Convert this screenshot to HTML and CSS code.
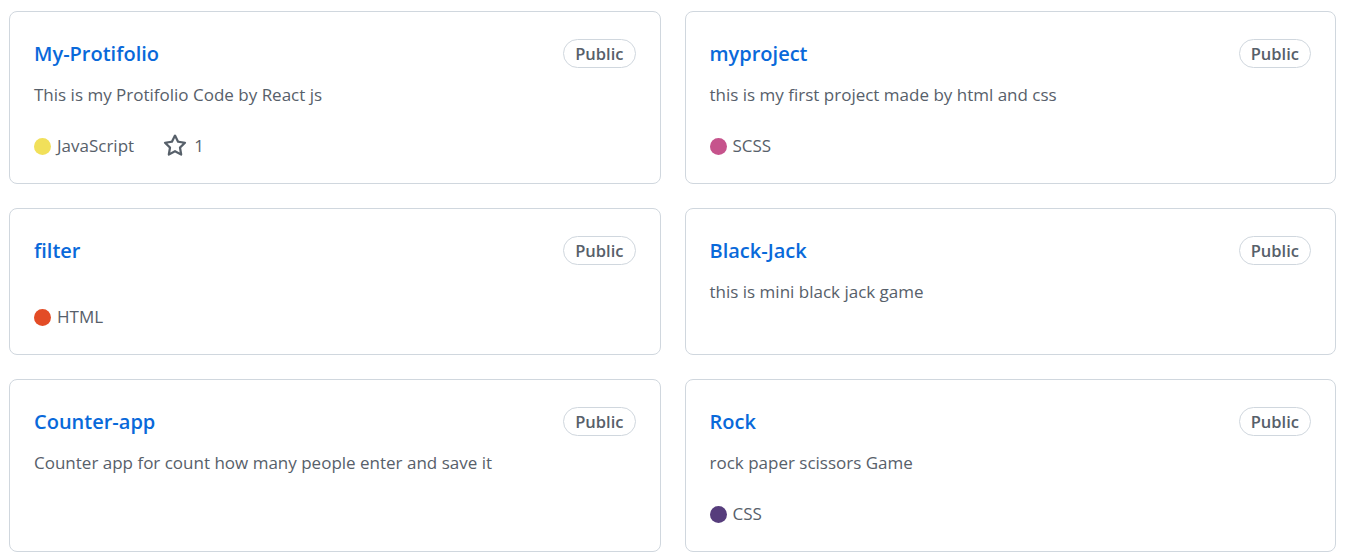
FILE: index.html
```html
<!DOCTYPE html>
<html>
<head>
<meta charset="utf-8">
<link rel="stylesheet" href="styles.css">
</head>
<body>
<div class="grid">
  <div class="card">
    <div class="head"><a class="title">My-Protifolio</a><span class="badge">Public</span></div>
    <p class="desc">This is my Protifolio Code by React js</p>
    <div class="meta">
      <span class="lang"><span class="dot js"></span>JavaScript</span>
      <span class="stars"><svg class="star" viewBox="0 0 16 16" width="24" height="24"><path fill="currentColor" d="M8 .25a.75.75 0 0 1 .673.418l1.882 3.815 4.21.612a.75.75 0 0 1 .416 1.279l-3.046 2.970.719 4.192a.751.751 0 0 1-1.088.791L8 12.347l-3.766 1.980a.75.75 0 0 1-1.088-.79l.72-4.194L.818 6.374a.75.75 0 0 1 .416-1.28l4.21-.611L7.327.668A.75.75 0 0 1 8 .25Zm0 2.445L6.615 5.5a.75.75 0 0 1-.564.41l-3.097.45 2.240 2.184a.75.75 0 0 1 .216.664l-.528 3.084 2.769-1.456a.75.75 0 0 1 .698 0l2.770 1.456-.53-3.084a.75.75 0 0 1 .216-.664l2.240-2.183-3.096-.45a.75.75 0 0 1-.564-.41L8 2.694Z"/></svg>1</span>
    </div>
  </div>
  <div class="card">
    <div class="head"><a class="title">myproject</a><span class="badge">Public</span></div>
    <p class="desc">this is my first project made by html and css</p>
    <div class="meta">
      <span class="lang"><span class="dot scss"></span>SCSS</span>
    </div>
  </div>
  <div class="card">
    <div class="head"><a class="title">filter</a><span class="badge">Public</span></div>
    <p class="desc"></p>
    <div class="meta">
      <span class="lang"><span class="dot html"></span>HTML</span>
    </div>
  </div>
  <div class="card">
    <div class="head"><a class="title">Black-Jack</a><span class="badge">Public</span></div>
    <p class="desc">this is mini black jack game</p>
  </div>
  <div class="card">
    <div class="head"><a class="title">Counter-app</a><span class="badge">Public</span></div>
    <p class="desc">Counter app for count how many people enter and save it</p>
  </div>
  <div class="card">
    <div class="head"><a class="title">Rock</a><span class="badge">Public</span></div>
    <p class="desc">rock paper scissors Game</p>
    <div class="meta">
      <span class="lang"><span class="dot css"></span>CSS</span>
    </div>
  </div>
</div>
</body>
</html>
```
FILE: styles.css
```css
html, body {
  margin: 0;
  padding: 0;
  background: #ffffff;
}
body {
  font-family: "Open Sans", "Noto Sans", sans-serif;
  color: #57606a;
}
.grid {
  display: grid;
  grid-template-columns: 1fr 1fr;
  column-gap: 24px;
  row-gap: 24px;
  padding: 11px 10px 8px 9px;
}
.card {
  border: 1px solid #d0d7de;
  border-radius: 8px;
  padding: 24px;
  display: flex;
  flex-direction: column;
}
.head {
  height: 35px;
  display: flex;
  align-items: center;
  justify-content: space-between;
}
.title {
  color: #0969da;
  font-size: 20px;
  font-weight: 600;
  text-decoration: none;
}
.badge {
  box-sizing: border-box;
  height: 29px;
  border: 1px solid #d0d7de;
  border-radius: 20px;
  padding: 0 11px;
  font-size: 16.5px;
  font-weight: 600;
  line-height: 27px;
  color: #57606a;
}
.desc {
  margin: 11px 0 0;
  font-size: 17px;
  line-height: 26px;
}
.desc:empty {
  height: 0;
}
.meta {
  margin-top: 25px;
  display: flex;
  align-items: center;
  font-size: 17px;
  line-height: 26px;
}
.lang {
  display: flex;
  align-items: center;
  margin-right: 29px;
}
.dot {
  width: 17px;
  height: 17px;
  border-radius: 50%;
  margin-right: 6px;
  display: inline-block;
}
.js { background: #f1e05a; }
.scss { background: #c6538c; }
.html { background: #e34c26; }
.css { background: #563d7c; }
.stars {
  display: flex;
  align-items: center;
}
.star {
  margin-right: 7px;
  color: #57606a;
}
```
